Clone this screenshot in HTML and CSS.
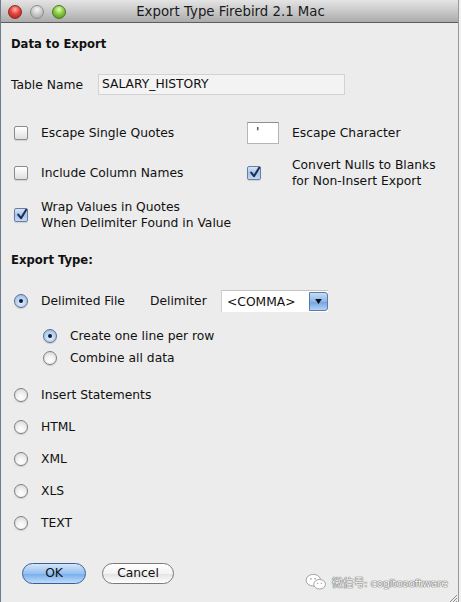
FILE: index.html
```html
<!DOCTYPE html>
<html>
<head>
<meta charset="utf-8">
<link rel="stylesheet" href="styles.css">
</head>
<body>
<div class="window">
  <div class="titlebar">
    <div class="lights">
      <span class="light red"></span>
      <span class="light gray"></span>
      <span class="light green"></span>
    </div>
    <div class="title">Export Type Firebird 2.1 Mac</div>
  </div>
  <div class="content">
    <div class="heading h1">Data to Export</div>

    <div class="row tablerow">
      <span class="tn-label">Table Name</span>
      <div class="field tablefield">SALARY_HISTORY</div>
    </div>

    <div class="optrow r1">
      <div class="col left">
        <span class="cb"></span><span class="lbl">Escape Single Quotes</span>
      </div>
      <div class="col right">
        <div class="field escfield">'</div><span class="lbl esc-lbl">Escape Character</span>
      </div>
    </div>

    <div class="optrow r2">
      <div class="col left">
        <span class="cb"></span><span class="lbl">Include Column Names</span>
      </div>
      <div class="col right">
        <span class="cb checked"><svg viewBox="0 0 14 14" width="14" height="14"><path d="M3.2 6.6 L6 10.2 L11.2 1.8" fill="none" stroke="#1c2f55" stroke-width="2.1" stroke-linecap="round" stroke-linejoin="round"/></svg></span>
        <span class="lbl two esc-lbl2">Convert Nulls to Blanks<br>for Non-Insert Export</span>
      </div>
    </div>

    <div class="optrow r3">
      <div class="col left">
        <span class="cb checked"><svg viewBox="0 0 14 14" width="14" height="14"><path d="M3.2 6.6 L6 10.2 L11.2 1.8" fill="none" stroke="#1c2f55" stroke-width="2.1" stroke-linecap="round" stroke-linejoin="round"/></svg></span>
        <span class="lbl two">Wrap Values in Quotes<br>When Delimiter Found in Value</span>
      </div>
    </div>

    <div class="heading h2">Export Type:</div>

    <div class="row delimrow">
      <span class="rb on"></span>
      <span class="lbl dfile">Delimited File</span>
      <span class="dlabel">Delimiter</span>
      <div class="combo">
        <span class="combo-text">&lt;COMMA&gt;</span>
        <span class="combo-btn"><svg viewBox="0 0 8 6" width="7" height="5"><path d="M0 0 L8 0 L4 6 Z" fill="#111"/></svg></span>
      </div>
    </div>

    <div class="row sub s1"><span class="rb on"></span><span class="lbl">Create one line per row</span></div>
    <div class="row sub s2"><span class="rb"></span><span class="lbl">Combine all data</span></div>

    <div class="row radio first"><span class="rb"></span><span class="lbl">Insert Statements</span></div>
    <div class="row radio"><span class="rb"></span><span class="lbl">HTML</span></div>
    <div class="row radio"><span class="rb"></span><span class="lbl">XML</span></div>
    <div class="row radio"><span class="rb"></span><span class="lbl">XLS</span></div>
    <div class="row radio"><span class="rb"></span><span class="lbl">TEXT</span></div>

    <div class="buttons">
      <button class="btn ok">OK</button>
      <button class="btn cancel">Cancel</button>
    </div>
  </div>

  <div class="watermark">
    <svg class="wm-icon" viewBox="0 0 24 20" width="22" height="18">
      <ellipse cx="9" cy="8" rx="8" ry="6.5" fill="#fff" stroke="#9a9a9a" stroke-width="1"/>
      <ellipse cx="16" cy="12.5" rx="6.5" ry="5.3" fill="#fff" stroke="#9a9a9a" stroke-width="1"/>
      <circle cx="6.3" cy="6.5" r="0.9" fill="#999"/>
      <circle cx="11" cy="6.5" r="0.9" fill="#999"/>
      <circle cx="14" cy="11.5" r="0.8" fill="#999"/>
      <circle cx="18" cy="11.5" r="0.8" fill="#999"/>
    </svg>
    <span class="wm-text">微信号: cogitosoftware</span>
  </div>
  <div class="grip">
    <svg viewBox="0 0 10 10" width="10" height="10">
      <path d="M9 2 L2 9 M9 5 L5 9 M9 8 L8 9" stroke="#8f8f8f" stroke-width="1"/>
    </svg>
  </div>
</div>
</body>
</html>
```

FILE: styles.css
```css
html, body {
  margin: 0;
  padding: 0;
  background: #f1f1f1;
}
body {
  width: 461px;
  height: 602px;
  overflow: hidden;
  font-family: "DejaVu Sans", "Noto Sans CJK SC", sans-serif;
  font-size: 12.3px;
  color: #111;
}
.window {
  position: relative;
  width: 457px;
  height: 602px;
  background: #ececec;
  border-left: 1px solid #6f7c8c;
  border-right: 1px solid #9a9a9a;
  box-sizing: content-box;
}
.titlebar {
  height: 22px;
  background: linear-gradient(#e4e4e4, #c9c9c9 50%, #ababab);
  border-bottom: 1px solid #5e5e5e;
  display: flex;
  align-items: center;
  position: relative;
}
.lights {
  display: flex;
  gap: 8px;
  padding-left: 7px;
  padding-top: 2px;
}
.light {
  width: 14px;
  height: 14px;
  border-radius: 50%;
  box-sizing: border-box;
}
.light.red {
  background: radial-gradient(circle at 50% 30%, #ffb3ad 0%, #e4443c 45%, #a51a14 100%);
  border: 1px solid #8b2a26;
}
.light.gray {
  background: radial-gradient(circle at 50% 30%, #f5f5f5 0%, #c8c8c8 50%, #9b9b9b 100%);
  border: 1px solid #8d8d8d;
}
.light.green {
  background: radial-gradient(circle at 50% 30%, #e2ffb8 0%, #88c943 45%, #4b8a16 100%);
  border: 1px solid #4a7a24;
}
.title {
  position: absolute;
  left: 0;
  right: 0;
  top: 4px;
  text-align: center;
  font-size: 13.3px;
  color: #1a1a1a;
  padding-left: 2px;
}
.content {
  padding-left: 10px;
}
.heading {
  font-weight: bold;
  font-size: 11.6px;
  height: 20px;
  line-height: 20px;
}
.h1 { margin-top: 11px; }
.h2 { margin-top: 19px; }
.row {
  display: flex;
  align-items: center;
}
.tablerow {
  margin-top: 20px;
  height: 21px;
}
.tn-label {
  width: 87px;
}
.field {
  box-sizing: border-box;
  height: 21px;
  line-height: 19px;
}
.tablefield {
  width: 247px;
  background: #f3f3f3;
  border: 1px solid #d2d2d2;
  padding-left: 3px;
}
.optrow {
  display: flex;
  align-items: center;
}
.col {
  display: flex;
  align-items: center;
}
.col.left {
  width: 233px;
  padding-left: 3px;
}
.col.right {
  flex: 1;
}
.r1 { margin-top: 27px; height: 22px; }
.r2 { margin-top: 13px; height: 32px; }
.r3 { margin-top: 10px; height: 32px; }
.cb {
  width: 14px;
  height: 14px;
  box-sizing: border-box;
  border: 1px solid #8c8c8c;
  border-radius: 2px;
  background: linear-gradient(#ffffff, #f0f0f0 50%, #dedede);
  box-shadow: 0 1px 1px rgba(0,0,0,0.12);
  margin-right: 13px;
  flex: none;
  position: relative;
}
.cb.checked {
  background: linear-gradient(#d6e5f8, #a6c5ec 50%, #c3d9f5);
  border-color: #6b7f9d;
}
.cb svg {
  position: absolute;
  left: 0;
  top: -1px;
}
.col.right .cb { margin-right: 31px; }
.lbl {
  line-height: 16px;
  white-space: nowrap;
}
.escfield {
  width: 32px;
  height: 22px;
  background: #fff;
  border: 1px solid #b5b5b5;
  border-top-color: #8e8e8e;
  padding-left: 8px;
  line-height: 18px;
  margin-right: 13px;
}
.rb {
  width: 14px;
  height: 14px;
  box-sizing: border-box;
  border-radius: 50%;
  border: 1px solid #7f7f7f;
  background: radial-gradient(circle at 50% 70%, #ffffff 0%, #f2f2f2 40%, #cfcfcf 100%);
  box-shadow: 0 1px 1px rgba(0,0,0,0.15);
  margin-right: 13px;
  flex: none;
  position: relative;
}
.rb.on {
  border-color: #5a6f90;
  background: radial-gradient(circle at 50% 65%, #e3eefb 0%, #b4cff0 55%, #86aee0 100%);
}
.rb.on::after {
  content: "";
  position: absolute;
  left: 4px;
  top: 4px;
  width: 4px;
  height: 4px;
  border-radius: 50%;
  background: #111c30;
}
.delimrow {
  margin-top: 20px;
  height: 22px;
  padding-left: 3px;
}
.dfile { width: 109px; }
.dlabel { width: 71px; }
.combo {
  width: 107px;
  height: 22px;
  box-sizing: border-box;
  background: #fff;
  border-top: 1px solid #c5c5c5;
  border-left: 1px solid #d0d0d0;
  display: flex;
  align-items: center;
  position: relative;
}
.combo-text {
  padding-left: 5px;
  flex: 1;
}
.combo-btn {
  width: 19px;
  height: 19px;
  margin-top: -1px;
  box-sizing: border-box;
  border: 1px solid #5b7aa6;
  border-radius: 0 3px 3px 0;
  background: linear-gradient(#c6dcf6, #8db6e8 50%, #6fa2e0 51%, #b3d2f6);
  display: flex;
  align-items: center;
  justify-content: center;
}
.sub {
  height: 20px;
  padding-left: 32px;
}
.s1 { margin-top: 14px; }
.s2 { margin-top: 2px; }
.radio {
  height: 20px;
  padding-left: 3px;
  margin-top: 12px;
}
.radio.first { margin-top: 17px; }
.buttons {
  display: flex;
  gap: 16px;
  margin-top: 30px;
  padding-left: 11px;
}
.btn {
  height: 21px;
  box-sizing: border-box;
  border-radius: 11px;
  font-family: "DejaVu Sans", sans-serif;
  font-size: 12.3px;
  color: #111;
  padding: 0;
  line-height: 19px;
}
.ok {
  width: 64px;
  border: 1px solid #3b5f93;
  background: linear-gradient(#d4e6fb, #95c0f0 50%, #74acec 51%, #bfdcfa);
}
.cancel {
  width: 72px;
  border: 1px solid #7a7a7a;
  background: linear-gradient(#ffffff, #f3f3f3 50%, #e2e2e2 51%, #ffffff);
}
.watermark {
  position: absolute;
  left: 304px;
  top: 573px;
  display: flex;
  align-items: center;
  gap: 5px;
  white-space: nowrap;
}
.wm-text {
  font-family: "DejaVu Sans", "Noto Sans CJK SC", sans-serif;
  font-size: 11px;
  color: #f7f7f7;
  text-shadow: 0 0 1px #666, 0 0 1px #666, 0 0 1px #777;
  letter-spacing: -0.3px;
  white-space: nowrap;
}
.grip {
  position: absolute;
  right: 0;
  bottom: 0;
  width: 10px;
  height: 10px;
}
```
